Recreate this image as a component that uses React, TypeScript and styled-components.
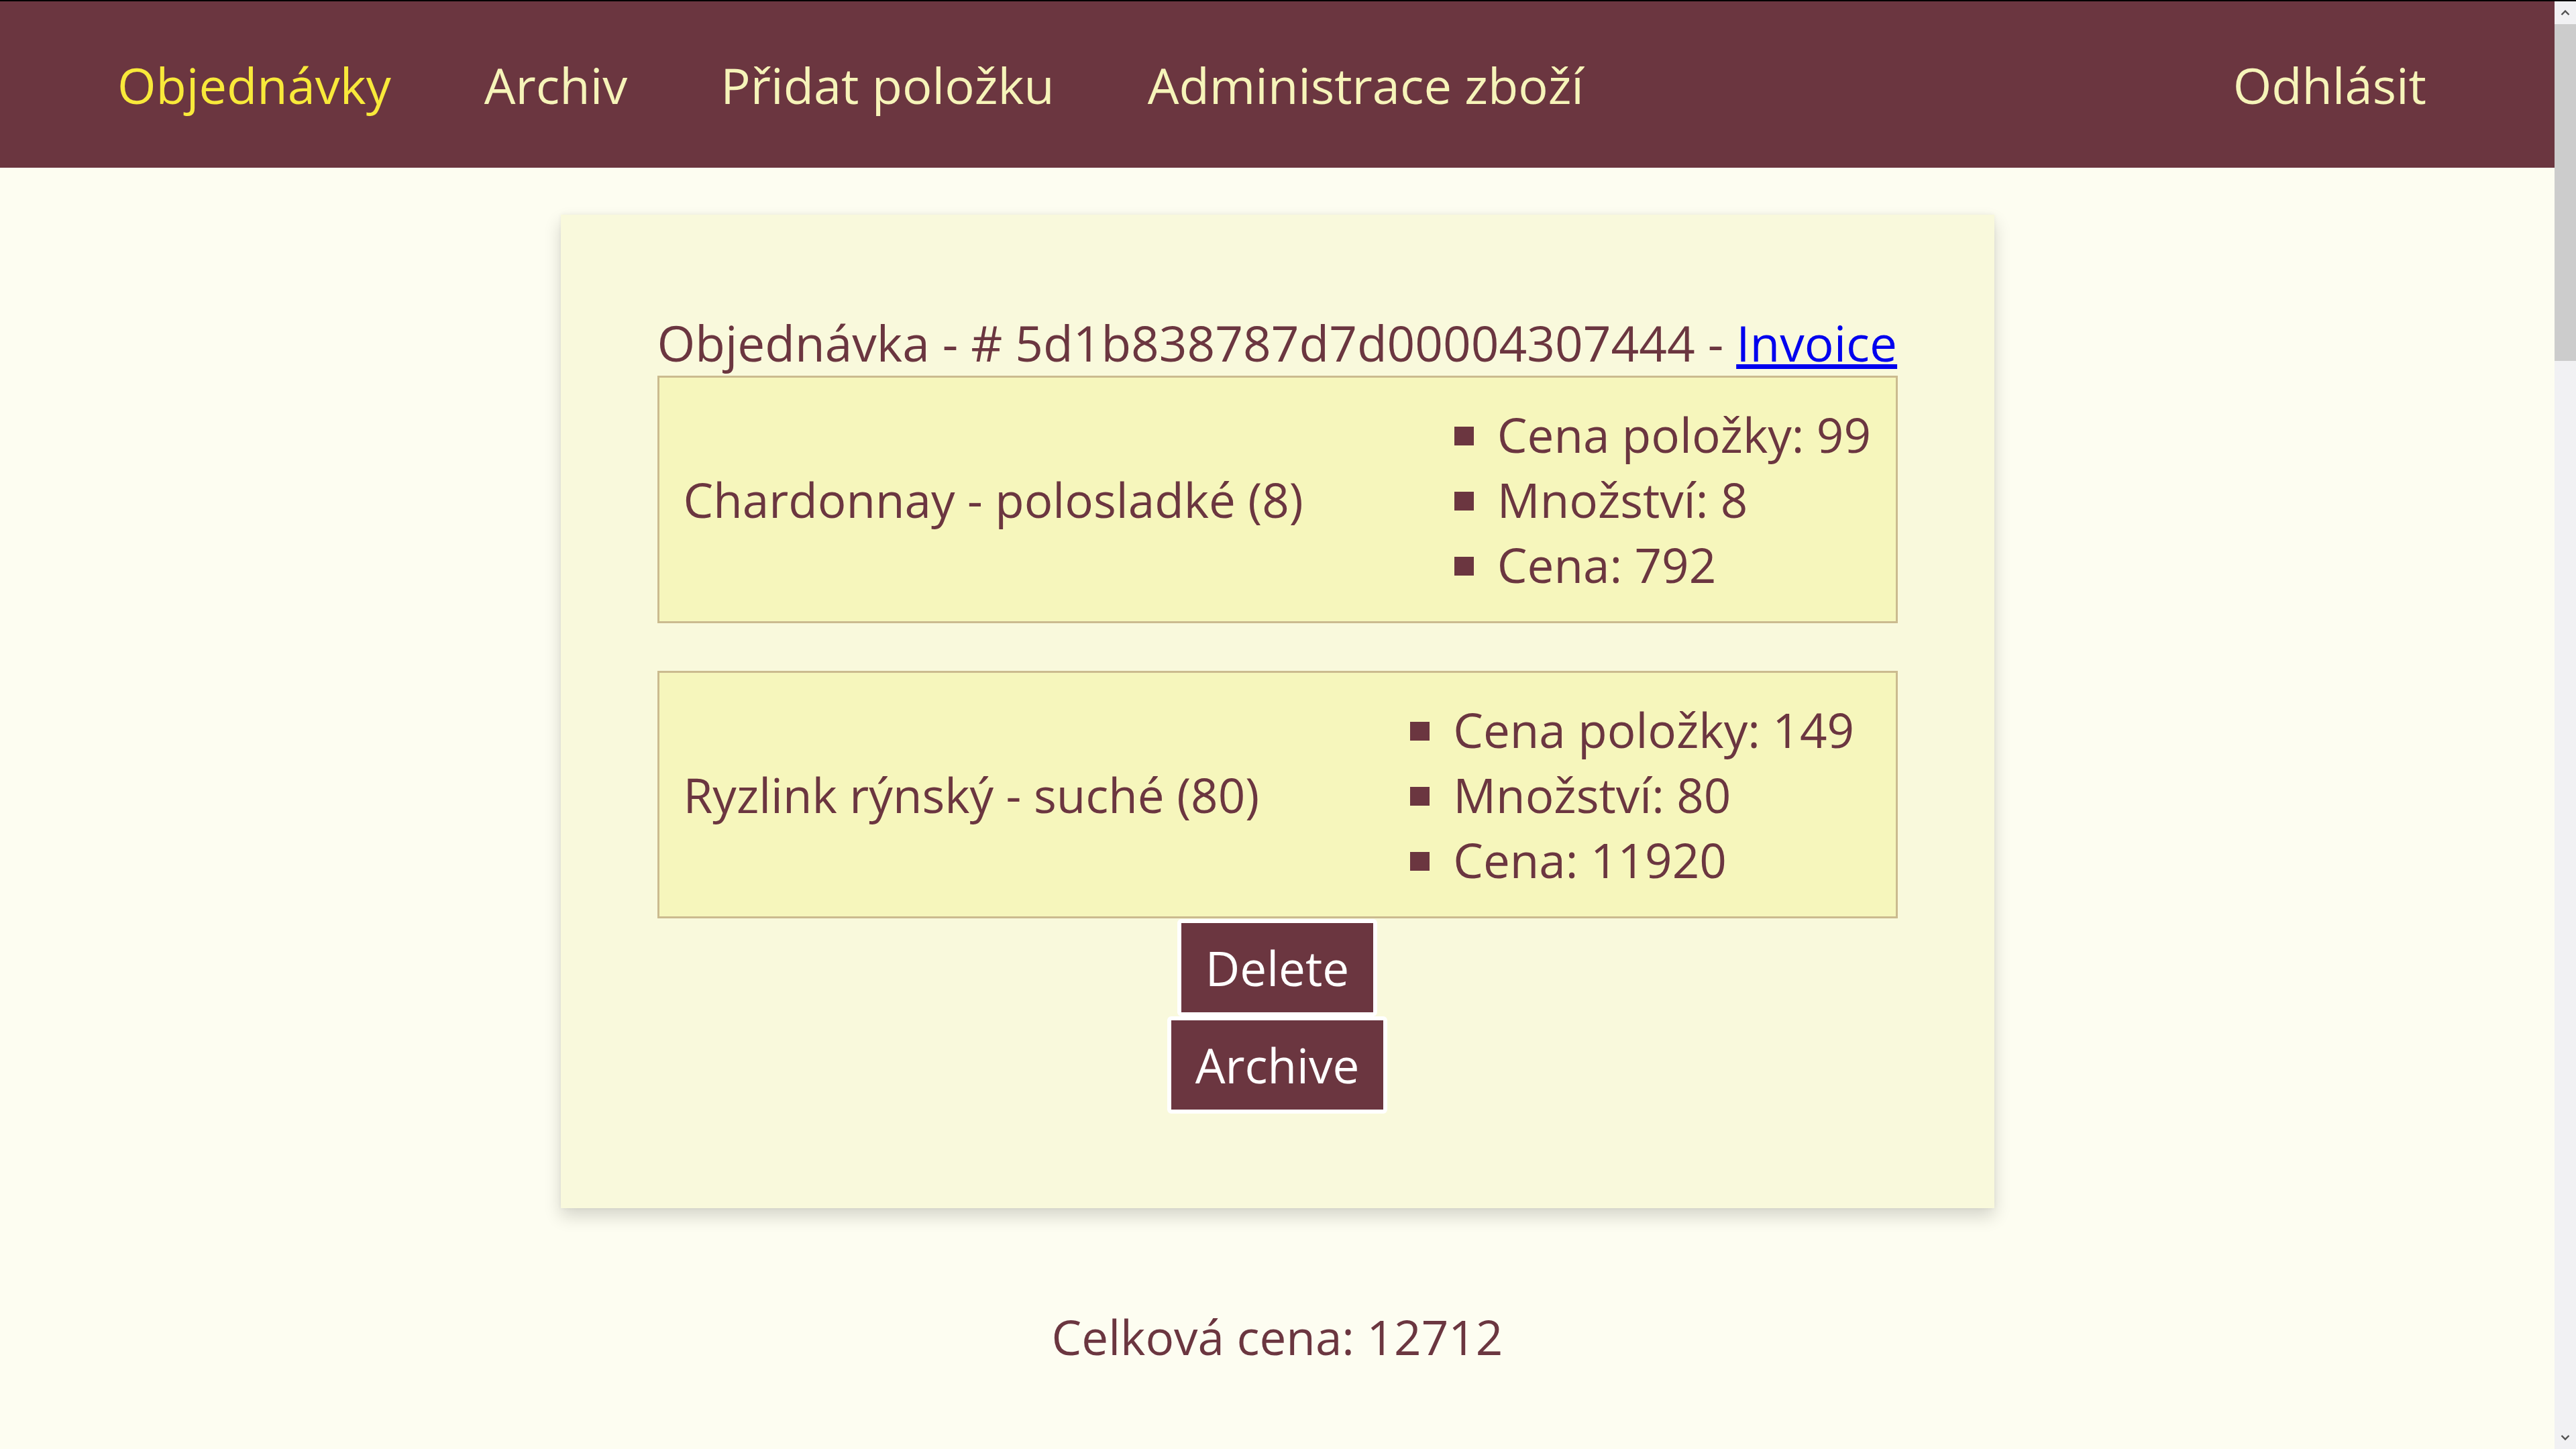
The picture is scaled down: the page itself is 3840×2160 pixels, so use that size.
import React from "react";
import styled, { createGlobalStyle } from "styled-components";

const maroon = "#6b3640";

const GlobalStyle = createGlobalStyle`
  html, body {
    margin: 0;
    padding: 0;
  }
  body {
    background-color: #fdfdf1;
    font-family: "Open Sans", "Noto Sans", sans-serif;
    color: ${maroon};
    font-size: 71px;
    border-top: 2px solid #000;
  }
`;

interface Item {
  name: string;
  price: number;
  amount: number;
}

const items: Item[] = [
  { name: "Chardonnay - polosladké", price: 99, amount: 8 },
  { name: "Ryzlink rýnský - suché", price: 149, amount: 80 },
];

const Chevron: React.FC<{ down?: boolean }> = ({ down }) => (
  <svg width="14" height="10" viewBox="0 0 14 10">
    <path
      d={down ? "M1.5 2 L7 7.5 L12.5 2" : "M1.5 8 L7 2.5 L12.5 8"}
      fill="none"
      stroke="#505050"
      strokeWidth="2.4"
    />
  </svg>
);

const App: React.FC = () => {
  const total = items.reduce((sum, i) => sum + i.price * i.amount, 0);
  return (
    <>
      <GlobalStyle />
      <Page>
        <Header>
          <NavLink active>Objednávky</NavLink>
          <NavLink>Archiv</NavLink>
          <NavLink>Přidat položku</NavLink>
          <NavLink>Administrace zboží</NavLink>
          <Logout>Odhlásit</Logout>
        </Header>

        <Main>
          <OrderCard>
            <OrderTitle>
              Objednávka - # 5d1b838787d7d00004307444 -{" "}
              <InvoiceLink href="#">Invoice</InvoiceLink>
            </OrderTitle>
            {items.map((item) => (
              <ItemBox key={item.name}>
                <ItemName>
                  {item.name} ({item.amount})
                </ItemName>
                <ItemDetails>
                  <Detail>Cena položky: {item.price}</Detail>
                  <Detail>Množství: {item.amount}</Detail>
                  <Detail>Cena: {item.price * item.amount}</Detail>
                </ItemDetails>
              </ItemBox>
            ))}
            <Actions>
              <ActionButton>Delete</ActionButton>
              <ActionButton>Archive</ActionButton>
            </Actions>
          </OrderCard>

          <Total>Celková cena: {total}</Total>
        </Main>
      </Page>

      <Scrollbar>
        <ScrollArrow>
          <Chevron />
        </ScrollArrow>
        <ScrollThumb />
        <ScrollSpacer />
        <ScrollArrow>
          <Chevron down />
        </ScrollArrow>
      </Scrollbar>
    </>
  );
};

const Page = styled.div`
  margin-right: 32px;
`;

const Header = styled.nav`
  display: flex;
  align-items: center;
  gap: 139px;
  height: 248px;
  padding: 0 191px 0 175px;
  background-color: ${maroon};
`;

const NavLink = styled.a<{ active?: boolean }>`
  color: ${(p) => (p.active ? "#f8e93a" : "#f6f4b9")};
  text-decoration: none;
  font-size: 74px;
  cursor: pointer;
`;

const Logout = styled(NavLink)`
  margin-left: auto;
`;

const Main = styled.main`
  display: flex;
  flex-direction: column;
  align-items: center;
  padding-top: 70px;
`;

const OrderCard = styled.section`
  width: 2137px;
  box-sizing: border-box;
  padding: 141px 144px 141px;
  background-color: #f9f9dc;
  box-shadow: 0 12px 24px rgba(0, 0, 0, 0.16), 0 0 6px rgba(0, 0, 0, 0.06);
`;

const OrderTitle = styled.h3`
  margin: 0;
  font-size: 73px;
  font-weight: 500;
  line-height: normal;
`;

const InvoiceLink = styled.a`
  color: #0000ee;
  text-decoration: underline;
`;

const ItemBox = styled.div`
  display: flex;
  align-items: center;
  padding: 36px 36px;
  background-color: #f6f6bc;
  border: 3px solid #cbbb8f;

  & + & {
    margin-top: 71px;
  }
`;

const ItemName = styled.span`
  white-space: nowrap;
`;

const ItemDetails = styled.ul`
  margin: 0 0 0 225px;
  padding: 0;
  list-style: none;
  white-space: nowrap;
`;

const Detail = styled.li`
  &::before {
    content: "";
    display: inline-block;
    width: 29px;
    height: 28px;
    margin: 0 35px 11px 0;
    background-color: ${maroon};
  }
`;

const Actions = styled.div`
  display: flex;
  flex-direction: column;
  align-items: center;
  padding-top: 1px;
`;

const ActionButton = styled.button`
  padding: 18px 36px;
  border: 6px solid #ffffff;
  border-radius: 6px;
  background-color: ${maroon};
  color: #ffffff;
  font-family: "Open Sans", "Noto Sans", sans-serif;
  font-size: 71px;
  line-height: normal;
  cursor: pointer;
`;

const Total = styled.p`
  margin: 143px 0 0;
  font-size: 71px;
`;

/* browser scrollbar, drawn because the page in the picture is scrolled */
const Scrollbar = styled.div`
  position: fixed;
  top: 2px;
  right: 0;
  bottom: 0;
  width: 32px;
  display: flex;
  flex-direction: column;
  background-color: #f1f1f3;
`;

const ScrollArrow = styled.div`
  height: 34px;
  display: flex;
  align-items: center;
  justify-content: center;
`;

const ScrollThumb = styled.div`
  height: 502px;
  background-color: #cccccc;
`;

const ScrollSpacer = styled.div`
  flex: 1;
`;

export default App;
